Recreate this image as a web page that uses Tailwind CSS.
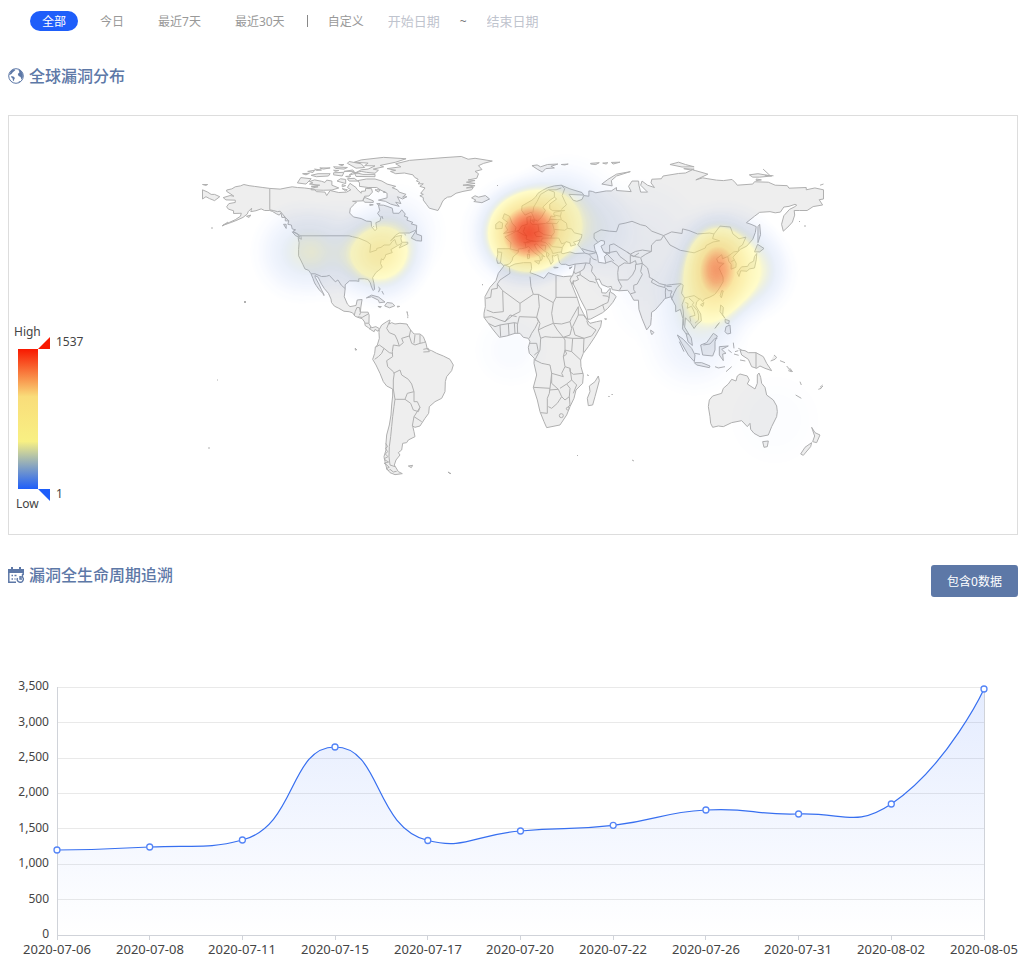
<!DOCTYPE html>
<html lang="zh-CN">
<head>
<meta charset="utf-8">
<meta name="viewport" content="width=device-width, initial-scale=1">
<title>全球漏洞分布</title>
<script src="https://cdn.jsdelivr.net/npm/@tailwindcss/browser@4"></script>
</head>
<body class="bg-white font-['Noto_Sans','Noto_Sans_CJK_SC',sans-serif] text-xs text-[#999]">

<nav class="flex h-10 items-center pt-0.5 pl-[30px]" aria-label="时间范围">
  <button type="button" class="mr-[22px] h-5 w-12 rounded-full bg-[#1e5efa] pt-px text-white">全部</button>
  <button type="button" class="mr-[34px] h-5 pt-0.5">今日</button>
  <button type="button" class="mr-[34px] h-5 pt-0.5">最近7天</button>
  <button type="button" class="mr-[22px] h-5 pt-0.5">最近30天</button>
  <span class="h-3 w-px bg-[#888]"></span>
  <label for="start" class="mr-6 ml-5 pt-0.5">自定义</label>
  <input id="start" type="text" placeholder="开始日期" class="w-[60px] pt-0.5 text-[13px] outline-none placeholder:text-[#bfc4ce]">
  <span class="mx-3 pt-0.5 text-[#777]">~</span>
  <input id="end" type="text" placeholder="结束日期" aria-label="结束日期" class="ml-2 w-[60px] pt-0.5 text-[13px] outline-none placeholder:text-[#bfc4ce]">
</nav>

<main class="px-2 pr-2.5">
  <section>
    <h2 class="mt-6 flex h-6 items-center gap-[5px] text-base font-medium text-[#5d78a7]">
      <svg class="size-4" viewBox="0 0 16 16" fill="currentColor" aria-hidden="true">
        <circle cx="8" cy="8" r="7.3" fill="none" stroke="currentColor" stroke-width="1"/>
        <path d="M1 7L3 3L6 1L7.3 2.2L6 3.2L4.6 4.4L3.5 6L2 6.8ZM3.2 8L5.4 8.4L7 10L6.2 11.3L5.9 13.2L4.9 12.3L4.6 10.4L3.2 9.2ZM10 1.2L13 2.7L14.8 6L14.8 9.6L13.4 11.4L12.6 9L10.6 8L9.8 6L11.4 4.6L11 3ZM10.4 14L11.5 13L12 13.8L10.4 14.8Z"/>
      </svg>
      全球漏洞分布
    </h2>

    <div class="relative mt-[27px] border border-[#ddd]">
      <svg class="block h-[418px] w-full" viewBox="9 116 1008 418" role="img" aria-label="全球漏洞分布热力图">
        <defs>
          <radialGradient id="spot">
            <stop offset="0" stop-color="#000" stop-opacity="1"/>
            <stop offset=".2" stop-color="#000" stop-opacity=".92"/>
            <stop offset=".4" stop-color="#000" stop-opacity=".68"/>
            <stop offset=".6" stop-color="#000" stop-opacity=".36"/>
            <stop offset=".8" stop-color="#000" stop-opacity=".11"/>
            <stop offset="1" stop-color="#000" stop-opacity="0"/>
          </radialGradient>
          <!-- density in the alpha channel is turned into the blue-yellow-red scale -->
          <filter id="heat" filterUnits="userSpaceOnUse" x="150" y="130" width="720" height="380" color-interpolation-filters="sRGB">
            <feGaussianBlur stdDeviation="2"/>
            <feColorMatrix values="0 0 0 1 0  0 0 0 1 0  0 0 0 1 0  0 0 0 1 0"/>
            <feComponentTransfer>
              <feFuncR type="table" tableValues=".12 .4 1 .98 .97 .96 .95"/>
              <feFuncG type="table" tableValues=".37 .57 .97 .91 .85 .48 .14"/>
              <feFuncB type="table" tableValues=".98 .86 .5 .45 .42 .24 .02"/>
              <feFuncA type="table" tableValues="0 .13 .42 .54 .63 .76 .84"/>
            </feComponentTransfer>
          </filter>
        </defs>

        <g fill="#eee" stroke="#b0b0b0" stroke-width="1" stroke-linejoin="round">
          <!-- longitude / latitude space -->
          <g transform="translate(513 348.5) scale(1.725 -2.3)">
            <path vector-effect="non-scaling-stroke" d="M-141 69.6L-145 70L-150 70.5L-153 70.8L-156 71.3L-158 70.7L-161 70.3L-163 69.4L-166 68.9L-166 68.3L-163.5 67.1L-161.8 66.2L-164 66.5L-168 65.6L-166.4 64.6L-161 64.5L-161 63.5L-164.7 63L-166 61.6L-165 60.6L-162 59.9L-162 58.7L-157.5 58.8L-158 57.5L-161 56L-164.5 54.8L-168 53.6L-163 54.9L-160 55.8L-156.5 57L-154 58.5L-153.5 59.5L-151.5 61L-152 59.5L-149 59.9L-146 60.7L-144 60L-141 60L-139.5 59.6L-137 58.5L-135.5 58L-134.5 59L-134 57L-132 57L-132 55.5L-130 55.5L-130.5 54L-128.5 53.7L-128 52L-126 51.6L-127.5 51L-124.8 49.6L-123 49L-122.7 47.5L-124.6 48.3L-124 46L-124.3 43L-124.3 40.3L-122.5 37.6L-121.8 36.5L-120.6 34.6L-118.5 34L-117.1 32.5L-116 30.5L-115 28.5L-114 27.3L-112.3 25.5L-110.3 24L-109.6 23L-109.5 23.3L-111 25.5L-112.5 28L-114.7 31L-114.8 31.7L-113 31L-111 28L-109.3 26L-107 24L-105.5 21.5L-105.2 20L-103.5 18.4L-101 17.5L-98 16.2L-95 16L-93 15.5L-91.5 14L-89 13.3L-87.5 13L-86 11.5L-85.7 10L-83.7 9L-82.5 8.2L-80.5 7.3L-80 8.3L-78.2 7.5L-77.4 8.6L-79.5 9.5L-82 9L-83.5 10.8L-83.4 14.5L-84 15.8L-88.5 15.8L-88.2 18L-87.5 21.3L-90.3 21.1L-91 18.7L-94.5 18.2L-96 19.3L-97.8 22.5L-97.3 26L-97.3 27.7L-94.8 29.4L-91 29.4L-89.3 29.2L-89.5 30.3L-86 30.3L-84 30L-82.7 28.5L-82 26.7L-81 25.2L-80.2 25.8L-80.6 28.3L-81.4 30.8L-79.5 33L-77.8 34L-75.8 35.3L-76.8 37L-76.3 39L-75.2 38.5L-74 40L-73.8 40.8L-70 41.7L-70.8 43L-67 44.7L-65.5 45.3L-64.5 45.9L-66 43.7L-63.5 44.6L-61 45.5L-61 46.2L-64.5 46.2L-65 47.8L-64.5 49.2L-68 48.7L-71 46.8L-68 49.3L-66 50.2L-60 50.2L-56 51.6L-55.8 53.5L-59 54.2L-58 54.8L-61.5 55.8L-61 57L-63 57.5L-62.5 58.5L-64.5 60.3L-66 58.8L-69.5 58.8L-70 61L-72.5 61.7L-75 62.3L-78 62.4L-77.3 60L-78.5 58.7L-76.7 57L-77 55.5L-79.5 54.7L-79 52L-80 51.2L-82 53L-82.2 55.2L-85 55.4L-88 56.5L-92.5 57.2L-94.7 58.9L-94.3 61L-92 62.7L-90.7 63.7L-93 64L-87 64.2L-86 66.2L-83.5 66.3L-81.5 68L-82 69.5L-85.5 69.6L-85.5 68.5L-88 68.3L-88 67.5L-90.5 69.3L-91 70L-94.5 71.8L-96 70L-94 69L-96.5 68L-101 67.8L-106 68.7L-108 66.5L-109 68L-114 68.2L-115 69.2L-121 69.8L-125 70L-128 70.3L-131 69.9L-135 69.3Z
            M-73 78.2L-68 77.5L-71 77L-68 76L-63 76.3L-58 75.5L-57 74.4L-55 73.6L-56 72.8L-54 72.2L-55 71.6L-52 71.6L-54 70.5L-51 69.8L-53.5 67.5L-52 67L-54 66.4L-52 65.6L-52 64.5L-50 62.5L-48.5 61L-43.5 60L-42 62L-41 63.7L-40 64.8L-38 65.8L-36 66L-33 67.5L-29 68.3L-24 69L-23 70L-27 69.8L-22 70.8L-29 71L-22 71.8L-27 72.3L-22 73L-26 73.3L-21 74L-20 76L-22 77L-18 77.8L-20 79.5L-17 80.5L-12 81.5L-22 82.7L-26 82.3L-30 83.5L-40 83L-50 82.4L-60 81.8L-68 80.3L-65 79Z
            M-90 73L-85 73.7L-80 73.7L-76 72.8L-73 71.5L-68 70.5L-70 69.9L-67 69L-66 68L-62 67L-64 65.8L-61.5 66L-64 65L-67 66L-65 63L-68 63.6L-66 61.8L-71 62.8L-74 64L-78 64.5L-73 65.5L-73 67.5L-77 69L-79 70L-84 70L-89 70.5L-89 72Z
            M-91 76.5L-88 77L-85 76.6L-80 76.2L-78 77.5L-81 78L-75 79L-77 79.6L-68 81L-62 82.5L-75 83.1L-88 82L-92 81L-84 80.6L-86 79.5L-80 79.4L-84 78L-88 77.7Z
            M-117 70.5L-113 70.3L-117 69.7L-117 69L-110 68.8L-105 68.9L-101 69.8L-105 71L-105 72.8L-108 73.2L-109 72.2L-111 72.7L-115 73.3L-118 72.6L-116 72L-118 71.5L-112 71Z
            M-125 72L-123 74.3L-117 73.8L-120 71.5Z M-92 76.6L-87 75.7L-80 75.7L-80 74.7L-91 74.8Z M-102 72.8L-100 73.8L-97 73.5L-97 71.7Z M-117 75.3L-113 76L-106 76L-107 75L-114 74.7Z M-104 76.4L-98 76.6L-99 75L-104 75.5Z M-96 80.5L-95 81.3L-88 80.3L-86 78.7L-91 78.4Z M-104 79L-96 78.7L-98 78L-103 78.3Z M-119 77L-115 77.5L-116 76.5Z M-122 76L-118 76.2L-120 75.5Z M-112 78.5L-106 78.5L-110 78Z M-115 78L-111 77.6L-114 77.4Z M-95 75.4L-93 76.5L-90 76.4Z M-98 77L-93 77.6L-92 77Z M-101 80L-98 80L-99 79.5Z M-104 77.5L-101 77.4L-103 77Z M-96 73.8L-92 74L-90 72.8L-95 72.8Z M-97 74.8L-94 75L-95 74.5Z M-99 71.3L-97 70.8L-99 70.3Z M-86 65.7L-81 64.2L-81 63.5L-86 63.6L-87 64.5Z M-99 69.5L-96 69L-97 68.5Z M-80 69L-77 69L-78 68Z M-75 68.3L-74 68L-75 67.8Z M-79 63L-77 63L-78 62.4Z M-83 62.7L-81 62.5L-83 62.2Z M-76 57.5L-75.5 56.5ZM-81 53.2L-80.5 52.8
            M-59 48L-56 51.4L-56 49.8L-53 49L-53 46.7L-56 46.9Z M-128 50.7L-125 50L-123.6 48.4L-126 49Z M-133 54L-131.5 54L-131.5 52.2Z M-154.5 57.5L-152 58L-153 57Z
            M-85 22L-82 23.2L-78 22.4L-74.2 20.2L-77.5 19.9L-78 21L-82 22.5Z M-74.4 18.5L-73 20L-70 19.7L-68.5 18.6L-71.5 17.7Z M-78.3 18.3L-76.3 18.2L-77 17.8Z M-67 18.4L-65.7 18.3L-67 18Z M-78 26.7L-77 26L-78 24.5M-76 25L-75 23.5M-63 49.8L-62 49.2M-61.5 16.2L-61.2 15.5M-61 14L-61 13.2M-61.8 10.6L-61 10.3"/>
            <path vector-effect="non-scaling-stroke" d="M-180 69L-177 68L-175 67L-173 67L-170 66L-173 64.3L-176 65.2L-178 66L-180 65ZM-180 71.3L-177 71.3L-178 70.9Z M-24 65.5L-22 66.4L-20 65.8L-16 66.5L-13.6 65L-18 63.4L-22.7 63.9L-21.5 64.5Z M-5.5 50L-1.5 50.6L1.4 51.2L1.7 52.7L-0.5 54.5L-2 57.5L-5 58.6L-6 56.5L-3 54.8L-4.5 53.3L-3 51.5Z M-10 52L-6.3 52.2L-6 54.5L-8 55.2L-10 54Z
            M130 33L131 31.3L132 33.8L135.7 33.6L137 34.6L140 35L141 38.5L141.3 41.3L140 40L139.5 38L137 37L136 35.7L132.5 35.5L130.9 34Z M140 42L143 42L145.5 43.5L141.8 45.3Z M142 46L143.5 49.5L143 54L142 53Z M120.1 23L121 25.2L121.9 25L120.8 22Z M108.7 19L110.7 20L110 18.3Z M79.8 8L81.7 7L80.5 6L79.9 7Z
            M51.5 71.5L55 73.5L60 75.8L68 76.9L60 75L57 73L57.5 70.7Z M11 79.5L14 79.8L16 79L20 80L26 80.2L22 79.2L24 78.5L19 78.2L17 76.7L14 78Z M28 80L32 80.2L30 79.8Z M45 80.5L50 80.8L48 80L45 80.2Z M52 80.6L55 80.8L54 80.2Z M57 80.9L62 81L58 80.2Z M91 80L96 81L100 80L105 79L98 78.9Z M99 78.2L105 78L103 77.6Z M137 75.5L142 76L150 75L143 74.5L139 74.5Z M141 73.7L144 73.3L141 73Z M145 78L149 75.2M146 75.3L151 75.1M178 71L180 71.5"/>
            <path vector-effect="non-scaling-stroke" d="M-9 43L-8.8 41L-9.5 38.7L-8.9 37L-7 37.2L-5.6 36L-2 36.8L-.5 38.3L0 39.8L3.2 41.9L3 43.2L5 43.4L7.5 43.8L9 44.4L10.5 43L12.3 41.7L15.5 40L16 38L17 39L16.8 40.4L18.4 39.9L16 41.5L13.8 43L12.3 45.2L13.7 45.5L15 44.5L18 42.5L19.4 41.8L19.5 40L21 38.5L22 36.6L23.2 37.8L23 39.2L22.8 40.5L24 40.2L26 40.9L26.2 39.5L27 37.2L28 36.6L30.5 36.6L32.5 36L34 36.3L36 36.7L35.8 35L34.5 31.5L32.5 31L32.5 29.9L34.3 27.9L35 29.5L35 28L37 25L39 21.5L42.5 16.5L43.3 12.7L45 12.8L52 15.6L55 17.5L57.8 20L59.8 22.5L58.5 23.7L56.5 24.5L56.3 26.2L54 24.1L51.5 24.2L51.2 26L50.2 26.5L48 30L50 30.2L51.5 27.8L55 26.7L57 27L57.5 25.6L61.5 25.1L66.5 25.3L68 23.7L70 21L72.7 21L73 17L74.8 13L77.5 8.1L79.8 10.3L80.2 13.5L80.3 15.7L82.5 16.8L86.8 20.5L88 21.7L91.5 22.5L94.3 18.5L94.3 16L97 17L98.5 13L98.3 8.5L100.4 6.3L101.5 2.9L104 1.3L103.4 4.5L101.5 6.8L99.5 9.3L100 13.3L101 12.6L103 11L105 8.7L106.7 10.5L109.2 12L108.8 15L106 18.5L106.5 20.3L108.5 21.7L110 20.4L111 21.5L114 22.3L117 23.5L119.5 26L121.8 29L121.8 31L119.5 34.8L120.5 36L122.4 37L119 37.3L118 39L121 40.8L121.4 39L124.5 40L125 38L126.5 36.5L126.4 34.5L129.2 35.3L129.4 37L127.5 39.7L130.7 42.3L132 43.2L135.5 44.5L139 47.5L140.5 50.5L141 53L138 54L135.3 54.7L140 57.5L143 59.2L149 59.5L152 59L155 59.3L157 61.5L160 61.8L163.5 62.7L164.5 62.3L163 61.5L160.3 60.5L157 57.7L155.7 54L156.7 51L160 53.3L162 55L163.3 58L163 60L166 60L170.5 60L174 61.7L179.5 62.4L177.5 64.7L180 65L180 69L175 69.8L170 69L170 70L160 69.7L159 70.8L152 71L148 72.3L140 72.5L139 71.5L130 71L129 72L127 73.5L122 73L118 73.2L113 73.8L110 74.2L106 73.3L113 75.8L106 77.3L104 77.7L100 76.3L96 76.1L87 75L86 73.8L80.5 73.6L80 72L82 70L78 71L74.8 72.8L74 71L78 68L74 68L73 71L72.8 72.8L69 72.8L67 70.5L68.5 68.2L60 68.7L60 70L57 68.5L54 68.5L48 67.7L46 68.3L44 68.5L44 66.2L41 66.5L40 64.8L37 64L34.8 64.5L32.5 67L41 66.7L40 67.8L33 69.4L28 71L24 70.7L20 69.9L17 68.7L14.5 67.5L13 65.8L11 64.5L5.2 62L5 60L7 58L10.6 59.3L12.5 56L14.2 55.4L16.5 57L18.8 60L17.3 61.5L21.5 64.5L24 65.8L25.3 65L21.3 62.8L21.3 60.8L23 59.9L30 60L24 59.3L23.5 58.5L24.4 57.3L22 57.6L21 55.5L19 54.4L14 54L11 54L10 55L10.5 57.6L8 57L8.3 54L5 53.3L3.5 51.4L1.6 50.9L-1.5 49.6L-4.7 48.5L-1.2 46L-1.5 43.4L-9 43.4Z
            M8.3 41L9.6 41L9.5 39.2L8.5 39Z M8.7 42.3L9.4 43L9.4 41.5Z M12.5 38L15.5 38.2L15 36.7Z M23.6 35.4L26.2 35.2L24 35Z M32.5 35L34.3 35.5L33 34.6Z M10.8 55.8L12.5 56L12 54.8Z"/>
            <path fill="#fff" vector-effect="non-scaling-stroke" d="M28 41.5L29 41.2L33 42L36 41.3L41.5 41.5L39 44L37.5 45L39 47.2L35 46.2L36.5 45.2L33.5 44.5L33 46L30.7 46.5L28.6 44Z M51 47L53 46.7L53 45.3L51 44.5L52.5 42L54.5 41L53 40L53.8 37L49.5 37.5L49 40.3L47.5 43L47 45Z"/>
            <!-- national borders -->
            <path fill="none" vector-effect="non-scaling-stroke" d="M-141 69.6L-141 60.3L-139 60L-136.5 59.5L-135 59.7L-132 57L-130 55.5M-123 49L-95 49L-93 48.6L-89.5 48L-84.7 46.5L-82.5 45.3L-83 41.8L-79 42.8L-79 43.5L-76.5 44L-74.7 45L-71.5 45L-70 46.5L-68.5 47.4L-67.8 45.7L-67 44.9M-117 32.5L-114.8 32.5L-111 31.3L-108.2 31.4L-106.5 31.8L-103 29L-101.5 29.8L-99.5 27.5L-97.2 26M-92 14.5L-91.5 16L-90.5 17.8L-89 17.8L-88.5 15.8M-90 13.8L-87.5 13.5L-84 15M-85.7 11L-83.6 11M-83 8.3L-82.5 9.5M-89 14.5L-88.3 15.7
            M47 48L47 50L51 51.6L56 51L60 50.8L61.5 54L65 54.5L69 55.3L74 53.8L77 53.3L80.5 51L87.3 49.1M49 46.3L47 48M52.5 42L56 41.3L56 45L58.5 45.5L61 44.3L66 42L68 41L71 42.2L75 42.8L80.2 42.2L80.3 45L83 47L85.7 47.2L87.3 49.1L92 50.7L98 50L98.3 52L102 51.3L107 49.8L114 50.2L116.5 49.8L115.7 47.8L119.8 46.8L116 46.3L112 44.8L111.5 43.7L105 41.6L97 42.7L91 45L87.3 49.1M116.5 49.8L120 53.2L126 52.8L127.5 49.8L131 47.7L135 48.4L133 45L131 44L130.7 42.3L128 42L124.5 40M126.5 37.8L128.4 38.5M80.2 42.2L77 41L74 39.5L75 37L78 35L79 32L79 31L81 30.2L85 28.2L89 27.5L92 27.8L97.3 28.2L98.7 27.5L97.7 24L99.5 22L102 22.5L105 23L108 21.5M81 30.2L80.2 28.8L84 27.3L88 26.5L88.2 27.8M89 27L92 27M88.5 22L88.3 24.5L88.5 26.3L90 25.2L92.2 25L91.3 23.5L92.3 21M92.3 22L93.3 24L95 26.5L97.3 28M99.5 22L98 19L98.7 16.3L99 13L98.7 10M100 20L101.5 19.5L101 17.5L103.5 18.4L105 16L105.5 14.4L102.5 13.8L103 11.7M102 22L104.8 20L104 19L106.8 16.5L107.6 14.5L107.5 12.3L105.5 11M100.2 6.5L102 6.2
            M75 37L71 36.5L71 34.5L69.3 32L66.5 29.8L61 29.8L60.7 33L61.2 35.6L57 38L54 37.3M61.2 35.6L64.5 37.2L68 37L71 38.2L71.5 36.7M75 37L74 33.5L75 32.2L72 28L70 27.5L70 25.5L71 24.4L68.2 23.8M61 29.8L63 27L61.6 25.2M58.5 38L54 41.5L60 42.3L62 40L66.5 37.5M68 37L68 40.5L70.5 40L73.5 39.6M66 42L70 40L73 41.5M44 41L46.5 38.9L48.5 38.4M44.8 39.5L44.5 37L46 35.5L45.5 33.5L48 31L48 30M36 36.7L42.3 37.2L44.5 37M42.3 37.2L41 34.5L38.8 33.4L36 32.5L35.5 33.5M38.8 33.4L39 32L44.5 29.2L46.5 29L48 28.5M39 32L37 31.5L38 30L36 29.3L35 29.4M43 16.8L47 17L52 19L53 16.5M52 19L55 20L55.7 22L55 22.7L52 23M56 24.5L55.7 22M41.5 41.5L44 41L46.5 41.3L48.5 41.8M40 43.4L44 42.5L48 41.8
            M28 71L30 69.5L28.5 66.5L30 64L31 62.5L28 60.5M20.5 69L24 68L24 65.8M20.5 69L16 67L14 64L12 61.5L11.5 59M28 69.8L25 69L20.5 69M28 59.3L27.5 57.5L28 56L31 54.5L31.5 52.2L34 52L35.5 50.3L40 49.5L39.5 47.8L38.3 47.2M24 58L27.5 57.5M21 56.2L26 56L28 56M22.8 54.4L25.5 54.3L26.5 55.5M19.5 54.4L22.8 54.4L23.7 52L24 50.5L22.5 49L18 49.5L15 51L14.5 53.8M24 51.8L30 51.4L31.5 52.2M22.5 49L22 48L17 48L16.5 46.8L13.7 46.6L10 47L7.5 47.6L8 49L6 50.8L7 53M15 51L12.3 50.3L13.5 48.7L17 48.7M10 47L7 46L7.5 43.8M2.5 51L6 49.5L8 49M-1.7 43.3L3.2 42.4M-8.8 42L-6.5 41.8L-7.3 37.2M22 48L26.5 48L28.2 45.5L30 46M20.5 46L22.7 44.3L28.5 43.9M16.3 46.5L19 46L20.5 44.8L22.5 42.5L23 41.3L26.3 41.8M19.5 42L21 41L20 39.8M16 45L19 44.8L18.6 42.6M26.3 41.8L28 42M6 46.2L8.5 46L10.5 46.6L13.5 46.5"/>
          </g>
          <!-- South America -->
          <g transform="translate(340 310) scale(.3333)" stroke-width="3">
            <path d="M118 58L125 45L140 35L150 30L148 42L155 38L165 42L180 40L200 42L212 60L222 72L240 72L250 80L258 100L262 118L275 122L290 130L310 138L330 148L340 165L335 182L320 200L316 215L315 245L305 265L285 275L268 290L266 310L255 325L240 348L225 352L218 348L222 365L225 380L205 390L200 398L188 400L185 420L175 428L180 435L168 450L163 465L175 485L187 491L165 494L150 488L140 475L135 455L132 440L138 420L138 400L140 375L148 345L153 315L155 285L158 258L158 237L140 228L130 215L120 190L108 165L98 148L104 130L106 112L112 105L118 85L117 68Z M205 468L218 466L214 473Z M324 486L333 491L328 490ZM45 116L50 119L47 121Z"/>
            <path fill="none" d="M160 237L165 268L162 290L158 320L155 350L152 380L148 410L147 440L150 465L165 470M137 400L143 410L136 415L143 425L136 432L144 440L133 446L135 450L146 456L132 460L138 463L148 472L138 476L146 482L150 478L160 486L170 484M148 36L140 55L148 68L165 75L172 90L178 108L160 105L157 125L158 140L140 152L143 170L160 185L163 190L160 210L160 237M106 112L118 105L132 115L125 130L115 140L104 148M132 115L148 128L157 130M160 190L180 180L185 195L205 208L215 222L222 245L202 250L195 268L170 268L165 268M195 268L212 280L220 300L235 305L240 292L232 275L222 275L222 245M240 292L222 320L217 348M222 320L245 335M178 108L190 98L185 85L208 78L212 60M208 78L215 100L225 105L240 100L250 98L258 95M225 75L222 100M240 74L240 100M250 118L265 115L268 125L250 126"/>
          </g>
          <!-- Africa -->
          <g transform="translate(470 260) scale(.3333)" stroke-width="3">
            <path d="M104 15L118 20L135 12L160 8L183 8L185 25L180 38L200 45L222 55L235 38L255 45L280 50L305 48L300 60L312 90L322 115L330 140L340 160L352 180L360 190L380 185L395 182L392 200L375 230L355 260L340 280L332 300L333 320L340 345L338 370L318 390L312 415L300 440L290 465L270 495L230 503L222 485L210 455L202 420L190 382L200 345L192 310L193 295L178 280L175 262L180 245L175 235L160 232L150 220L135 220L110 228L88 232L70 210L55 190L42 172L42 160L46 140L45 110L60 82L78 62L85 40Z M385 348L388 362L375 410L368 435L355 437L352 415L360 395L358 378L375 365Z M404 176L410 177L406 179ZM426 402L427 405ZM416 408L418 411ZM353 344L355 348ZM36 73L39 75Z"/>
            <path fill="none" d="M118 20L120 40L90 60L82 72L82 85L65 88L62 112L48 115M82 72L98 92L100 155L70 158L50 150M98 92L150 130L150 155L130 165L105 185M150 130L190 103L183 80L180 50M190 103L205 103L250 128L258 112L258 48M258 112L322 112M205 103L208 140L200 172M148 170L200 172L205 185L195 205L185 220L178 235M148 170L142 195L143 220M250 128L245 160L250 190M205 210L225 200L250 190L262 210L280 232M200 172L210 190L205 210L212 235M250 190L275 192L300 185L305 175L325 140M300 185L305 205L300 225L280 232M212 235L225 230L245 232L280 232L285 240L285 270L280 290L285 320L275 340L280 350L245 340L240 315L215 310L195 300M180 250L200 250L205 275L193 285M212 235L210 270L195 300M190 382L240 385L245 340M240 385L238 400L232 415L232 460L212 458M238 390L265 388L275 410L262 430L245 445L235 440M270 385L290 372L300 385L298 410L285 420L275 410M245 340L245 370L265 388M285 320L300 325L305 360L290 372M285 270L305 275L332 300M300 335L310 343L340 340M308 235L305 275M342 235L340 278M280 232L308 235L342 235M325 140L325 165L308 200L315 225L342 235L365 228L378 210L355 195L350 182M325 165L340 165L352 180M42 172L65 170L90 180L105 185M55 190L75 200L90 195L92 230M115 190L117 225M133 188L135 220M90 195L133 188L142 190M105 185L120 165L140 170M280 290L290 282L285 270M300 325L300 335M305 360L320 375L310 400M298 410L300 435L290 445"/>
            <circle cx="274" cy="467" r="6"/><circle cx="293" cy="446" r="4"/>
          </g>
          <!-- Oceania -->
          <g transform="translate(660 300) scale(.3333)" stroke-width="3">
            <path d="M148 300L158 288L185 280L190 265L205 252L215 238L228 243L232 228L240 222L262 228L268 240L262 252L285 267L292 250L292 225L297 219L302 232L305 250L315 262L320 285L340 300L350 318L352 335L350 350L335 380L325 405L300 410L282 400L272 388L270 370L262 380L245 362L215 368L190 380L175 378L158 382L152 370L150 350L145 320Z M308 425L325 423L322 440L312 442Z M455 382L465 398L480 405L470 428L458 425L464 408Z M455 428L452 440L430 466L422 462L435 442Z M240 150L255 152L265 158L288 158L310 170L320 190L335 212L315 205L300 198L290 205L275 200L265 178L245 165Z M52 105L70 118L95 145L105 165L103 185L85 165L65 130Z M103 188L125 188L150 198L148 203L110 195Z M122 135L140 128L160 100L172 108L165 125L165 150L158 168L128 165Z M178 140L205 138L185 148L198 160L188 162L190 182L178 165Z M182 15L190 22L188 45L195 55L180 35Z M198 80L210 75L212 100L202 102L195 95Z M165 85L178 68ZM195 58L208 62L206 72L196 68Z M332 183L345 178L350 172L342 165M360 182L375 188M380 198L395 215L385 212M420 245L424 255M407 285L424 295M475 268L484 265M480 262L488 255M165 200L175 204L195 200M198 215L215 200M220 128L222 145M205 150L215 158M225 155L235 152M235 145L245 150M58 125L72 155M105 160L120 163"/>
            <path fill="none" d="M288 158L288 205M130 135L150 132L165 115L172 115M390 205L398 216M222 162L236 166M240 180L256 183"/>
          </g>
          <path fill="none" d="M244 301L246 303M244 303L246 301M225 224L222 226L228 222M211 228L213 228M497 185L498 186M632 460L634 461M804 226L806 226M799 222L800 221M355 348L357 350M407 312L408 316M217 380L218 380M208 448L210 448M577 455L578 456M820 389L823 386"/>
        </g>

        <g filter="url(#heat)" fill="url(#spot)">
          <circle cx="302" cy="252" r="54" opacity=".25"/>
          <g opacity=".13"><circle cx="340" cy="252" r="56"/></g>
          <g opacity=".15"><circle cx="396" cy="234" r="54"/></g>
          <circle cx="380" cy="256" r="54" opacity=".49"/>
          <circle cx="529" cy="233" r="55" opacity=".97"/>
          <g opacity=".36"><circle cx="520" cy="233" r="62"/><circle cx="550" cy="223" r="60"/></g>
          <g opacity=".17"><circle cx="566" cy="211" r="62"/><circle cx="592" cy="228" r="54"/></g>
          <g opacity=".06"><circle cx="640" cy="245" r="80"/></g>
          <ellipse cx="717" cy="270" rx="44" ry="60" opacity=".75"/>
          <g opacity=".36"><circle cx="724" cy="260" r="62"/><circle cx="746" cy="272" r="54"/><circle cx="708" cy="297" r="60"/></g>
          <circle cx="694" cy="342" r="58" opacity=".14"/>
          <g opacity=".04"><circle cx="511" cy="350" r="48"/><circle cx="655" cy="300" r="60"/></g>
          <circle cx="775" cy="420" r="66" opacity=".02"/>
        </g>
      </svg>

      <div class="absolute top-[208px] left-[5px] text-[#444]">
        <div class="leading-4">High</div>
        <div class="mt-[9px] ml-1 flex">
          <div class="h-[140px] w-5 bg-[linear-gradient(to_top,#1e5efa,#f8f083_34%,#f9dd7a_66%,#f81800)]"></div>
          <div class="flex h-[164px] flex-col justify-between">
            <div class="-mt-3 flex h-3 gap-1.5"><svg class="size-3" viewBox="0 0 12 12"><path fill="#f81800" d="M0 12L12 0V12Z"/></svg><span class="-mt-[3px] leading-4">1537</span></div>
            <div class="mb-3 flex h-3 gap-1.5"><svg class="size-3" viewBox="0 0 12 12"><path fill="#1e5efa" d="M0 0H12V12Z"/></svg><span class="-mt-[3px] leading-4">1</span></div>
          </div>
        </div>
        <div class="-mt-[17px] ml-0.5 leading-4">Low</div>
      </div>
    </div>
  </section>

  <section>
    <header class="mt-[30px] flex items-start justify-between">
      <h2 class="-mt-0.5 flex h-6 items-center gap-[5px] text-base font-medium text-[#5d78a7]">
        <svg class="size-4" viewBox="0 0 16 16" fill="none" stroke="currentColor" aria-hidden="true">
          <path fill="currentColor" stroke="none" d="M0 2H3V0H5V2H11V0H13V2H16V6H0Z"/>
          <path stroke-width="1.5" d="M.8 5V15.2H8M15.2 5V8"/>
          <path stroke-width="1.4" d="M3.5 8.5H5M6.5 8.5H8.5M3.5 12H5M6.5 12H7.5M9.5 11A3 3 0 1 0 14 9.8M12 9V12H14M14.5 7V10H11.5"/>
        </svg>
        漏洞全生命周期追溯
      </h2>
      <button type="button" class="h-8 w-[87px] rounded-[3px] bg-[#5d78a7] pt-0.5 text-white">包含0数据</button>
    </header>
  </section>
</main>

<svg class="mt-[73px] block w-full" viewBox="0 670 1028 288" role="img" aria-label="漏洞数量趋势">
  <defs>
    <linearGradient id="area" x1="0" y1="0" x2="0" y2="1">
      <stop offset="0" stop-color="#1e5efa" stop-opacity=".12"/>
      <stop offset="1" stop-color="#1e5efa" stop-opacity="0"/>
    </linearGradient>
  </defs>
  <path stroke="#e9e9e9" shape-rendering="crispEdges" d="M57 687.5H984M57 722.5H984M57 758.5H984M57 793.5H984M57 828.5H984M57 864.5H984M57 899.5H984"/>
  <path fill="url(#area)" d="M57 850C57 850 103.4 849.5 149.7 847C196 844.5 204 850 242.4 840C296.6 826 289 747 335 747C381.5 747 373.6 827 427.8 840.5C466 850 474 834.8 520.5 831C567 827 567 830.5 613.2 825.3C660 820 659.5 812.8 705.9 810C752 807.2 752 815.5 798.6 814C845 812.5 855 828 891.3 804C948 765.7 984 689 984 689V935H57Z"/>
  <path fill="none" stroke="#d0d3d9" shape-rendering="crispEdges" d="M57.5 687V940M984.5 689V940M57 935.5H984M149.5 935V940M242.5 935V940M335.5 935V940M427.5 935V940M520.5 935V940M613.5 935V940M705.5 935V940M798.5 935V940M891.5 935V940"/>
  <path fill="none" stroke="#376ff0" stroke-width="1.2" d="M57 850C57 850 103.4 849.5 149.7 847C196 844.5 204 850 242.4 840C296.6 826 289 747 335 747C381.5 747 373.6 827 427.8 840.5C466 850 474 834.8 520.5 831C567 827 567 830.5 613.2 825.3C660 820 659.5 812.8 705.9 810C752 807.2 752 815.5 798.6 814C845 812.5 855 828 891.3 804C948 765.7 984 689 984 689"/>
  <g fill="#fff" stroke="#5585f7" stroke-width="1.3">
    <circle cx="57" cy="850" r="3"/><circle cx="149.7" cy="847" r="3"/><circle cx="242.4" cy="840" r="3"/><circle cx="335" cy="747" r="3"/><circle cx="427.8" cy="840.5" r="3"/><circle cx="520.5" cy="831" r="3"/><circle cx="613.2" cy="825.3" r="3"/><circle cx="705.9" cy="810" r="3"/><circle cx="798.6" cy="814" r="3"/><circle cx="891.3" cy="804" r="3"/><circle cx="984" cy="689" r="3"/>
  </g>
  <g class="fill-[#444] text-xs" text-anchor="end">
    <text x="49" y="690">3,500</text><text x="49" y="726">3,000</text><text x="49" y="761">2,500</text><text x="49" y="796">2,000</text><text x="49" y="832">1,500</text><text x="49" y="867">1,000</text><text x="49" y="903">500</text><text x="49" y="938">0</text>
  </g>
  <g class="fill-[#444] text-[13px]" text-anchor="middle">
    <text x="57" y="954">2020-07-06</text><text x="150" y="954">2020-07-08</text><text x="242" y="954">2020-07-11</text><text x="335" y="954">2020-07-15</text><text x="428" y="954">2020-07-17</text><text x="520" y="954">2020-07-20</text><text x="613" y="954">2020-07-22</text><text x="706" y="954">2020-07-26</text><text x="798" y="954">2020-07-31</text><text x="891" y="954">2020-08-02</text><text x="984" y="954">2020-08-05</text>
  </g>
</svg>
</body>
</html>
